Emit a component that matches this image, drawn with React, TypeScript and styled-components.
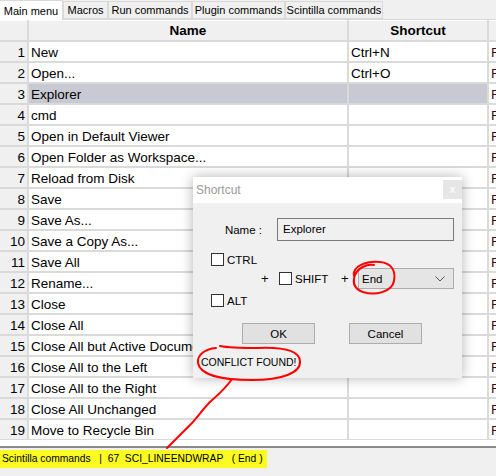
import React from 'react'
import styled, { createGlobalStyle } from 'styled-components'

type Command = {
  name: string,
  shortcut: string,
}

const GlobalStyle = createGlobalStyle`
  html, body {
    margin: 0;
    padding: 0;
    background: #f0f0f0;
    overflow: hidden;
  }
  * {
    box-sizing: border-box;
  }
`

const Page = styled.div`
  position: relative;
  width: 496px;
  height: 476px;
  overflow: hidden;
  font-family: "Liberation Sans", Arial, sans-serif;
  color: #000;
`

const TabBar = styled.div`
  display: flex;
  align-items: flex-end;
  height: 20px;
  background: #f0f0f0;
  border-bottom: 1px solid #d9d9d9;
`

const Tab = styled.div<{ $width: number, $active?: boolean }>`
  width: ${p => p.$width}px;
  height: ${p => p.$active ? 20 : 18}px;
  margin-bottom: ${p => p.$active ? -1 : 0}px;
  display: flex;
  align-items: center;
  justify-content: center;
  font-size: 11px;
  background: ${p => p.$active ? '#fff' : '#f0f0f0'};
  border: 1px solid #d9d9d9;
  border-bottom: ${p => p.$active ? 'none' : '1px solid #d9d9d9'};
  border-left: ${p => p.$active ? 'none' : '1px solid #d9d9d9'};
`

const GridArea = styled.div`
  height: 426px;
  background: #fff;
  overflow: hidden;
`

const Grid = styled.div`
  display: grid;
  grid-template-columns: 27px 318px 138px 200px;
  grid-template-rows: 20px;
  grid-auto-rows: 19px;
  gap: 2px;
  background: #dadada;
  width: max-content;
  padding-bottom: 1px;
`

const HeaderCell = styled.div`
  background: #f0f0f0;
  border-top: 1px solid #fff;
  display: flex;
  align-items: center;
  justify-content: center;
  font-size: 13.5px;
  font-weight: bold;
  white-space: nowrap;
  overflow: hidden;
`

const RowHead = styled.div`
  background: #f0f0f0;
  display: flex;
  align-items: center;
  justify-content: flex-end;
  padding: 1px 2px 0 0;
  font-size: 13.5px;
`

const Cell = styled.div<{ $selected?: boolean, $dim?: boolean }>`
  background: ${p => p.$selected ? '#c8c9d2' : '#fff'};
  display: flex;
  align-items: center;
  padding: 1px 0 0 2px;
  font-size: 13.5px;
  white-space: nowrap;
  overflow: hidden;
  color: ${p => p.$dim ? '#3a0810' : '#000'};
`

const StatusBar = styled.div`
  height: 30px;
  border-top: 2px solid #8a8a8a;
  background: #f0f0f0;
`

const Highlight = styled.span`
  display: inline-block;
  background: #fbfb22;
  padding: 3px 4px 4px 2px;
  font-size: 10.3px;
  white-space: pre;
`

const Dialog = styled.div`
  position: absolute;
  left: 193px;
  top: 177px;
  width: 269px;
  height: 201px;
  background: #f0f0f0;
  box-shadow: 0 0 12px rgba(0, 0, 0, 0.3);
  font-size: 11.5px;
  display: flex;
  flex-direction: column;
`

const TitleBar = styled.div`
  height: 26px;
  background: #fff;
  display: flex;
  justify-content: space-between;
  padding-left: 3px;
  color: #9a9a9a;
  font-size: 12px;
  line-height: 27px;
`

const CloseButton = styled.div`
  width: 19px;
  height: 19px;
  margin-top: 3px;
  background: #e6e6e6;
  color: #fafafa;
  font-size: 11px;
  line-height: 18px;
  text-align: center;
  font-weight: bold;
`

const NameRow = styled.div`
  display: flex;
  align-items: center;
  margin-top: 15px;
  height: 23px;
`

const Label = styled.div`
  width: 69px;
  text-align: right;
  margin-right: 15px;
`

const TextBox = styled.div`
  width: 177px;
  height: 23px;
  border: 1px solid #7a7a7a;
  background: #f0f0f0;
  padding-left: 5px;
  line-height: 20px;
`

const Modifiers = styled.div`
  display: flex;
  flex-direction: column;
  margin-top: 12px;
`

const ModRow = styled.div<{ $indent: number, $height: number, $gap: number }>`
  display: flex;
  align-items: center;
  padding-left: ${p => p.$indent}px;
  height: ${p => p.$height}px;
  margin-top: ${p => p.$gap}px;
`

const Box = styled.div`
  width: 13px;
  height: 13px;
  border: 1px solid #333;
  background: #fff;
  margin-right: 3px;
`

const BoxLabel = styled.span<{ $width?: number }>`
  display: inline-block;
  width: ${p => p.$width ? `${p.$width}px` : 'auto'};
`

const Plus = styled.span<{ $width: number }>`
  display: inline-block;
  width: ${p => p.$width}px;
  font-size: 13px;
`

const Combo = styled.div`
  width: 96px;
  height: 21px;
  border: 1px solid #adadad;
  background: #e5e5e5;
  display: flex;
  align-items: center;
  justify-content: space-between;
  padding: 0 8px 0 3px;
`

const Buttons = styled.div`
  display: flex;
  margin-top: 16px;
  padding-left: 49px;
  gap: 34px;
`

const Button = styled.div`
  width: 73px;
  height: 21px;
  border: 1px solid #adadad;
  background: #e1e1e1;
  display: flex;
  align-items: center;
  justify-content: center;
`

const Conflict = styled.div`
  margin-top: 12px;
  padding-left: 8px;
  font-size: 10.5px;
`

const Marks = styled.svg`
  position: absolute;
  left: 0;
  top: 0;
  pointer-events: none;
`

const commands: Command[] = [
  { name: 'New', shortcut: 'Ctrl+N' },
  { name: 'Open...', shortcut: 'Ctrl+O' },
  { name: 'Explorer', shortcut: '' },
  { name: 'cmd', shortcut: '' },
  { name: 'Open in Default Viewer', shortcut: '' },
  { name: 'Open Folder as Workspace...', shortcut: '' },
  { name: 'Reload from Disk', shortcut: '' },
  { name: 'Save', shortcut: '' },
  { name: 'Save As...', shortcut: '' },
  { name: 'Save a Copy As...', shortcut: '' },
  { name: 'Save All', shortcut: '' },
  { name: 'Rename...', shortcut: '' },
  { name: 'Close', shortcut: '' },
  { name: 'Close All', shortcut: '' },
  { name: 'Close All but Active Document', shortcut: '' },
  { name: 'Close All to the Left', shortcut: '' },
  { name: 'Close All to the Right', shortcut: '' },
  { name: 'Close All Unchanged', shortcut: '' },
  { name: 'Move to Recycle Bin', shortcut: '' },
]

const tabs = [
  { label: 'Main menu', width: 63 },
  { label: 'Macros', width: 45 },
  { label: 'Run commands', width: 84 },
  { label: 'Plugin commands', width: 93 },
  { label: 'Scintilla commands', width: 98 },
]

const App = () => {
  return (
    <Page>
      <GlobalStyle />
      <TabBar>
        {tabs.map((t, i) => (
          <Tab key={t.label} $width={t.width} $active={i === 0}>{t.label}</Tab>
        ))}
      </TabBar>
      <GridArea>
        <Grid>
          <HeaderCell />
          <HeaderCell>Name</HeaderCell>
          <HeaderCell>Shortcut</HeaderCell>
          <HeaderCell />
          {commands.map((c, i) => (
            <React.Fragment key={c.name}>
              <RowHead>{i + 1}</RowHead>
              <Cell $selected={i === 2}>{c.name}</Cell>
              <Cell $selected={i === 2}>{c.shortcut}</Cell>
              <Cell $dim>F</Cell>
            </React.Fragment>
          ))}
        </Grid>
      </GridArea>
      <StatusBar>
        <Highlight>{'Scintilla commands   |  67  SCI_LINEENDWRAP   ( End )'}</Highlight>
      </StatusBar>

      <Dialog>
        <TitleBar>
          Shortcut
          <CloseButton>x</CloseButton>
        </TitleBar>
        <NameRow>
          <Label>Name :</Label>
          <TextBox>Explorer</TextBox>
        </NameRow>
        <Modifiers>
          <ModRow $indent={18} $height={13} $gap={0}>
            <Box />CTRL
          </ModRow>
          <ModRow $indent={68} $height={21} $gap={2}>
            <Plus $width={18}>+</Plus>
            <Box />
            <BoxLabel $width={46}>SHIFT</BoxLabel>
            <Plus $width={17}>+</Plus>
            <Combo>
              End
              <svg width="10" height="6" viewBox="0 0 10 6">
                <path d="M0.5 0.5 L5 5 L9.5 0.5" fill="none" stroke="#555" strokeWidth="1" />
              </svg>
            </Combo>
          </ModRow>
          <ModRow $indent={18} $height={13} $gap={5}>
            <Box />ALT
          </ModRow>
        </Modifiers>
        <Buttons>
          <Button>OK</Button>
          <Button>Cancel</Button>
        </Buttons>
        <Conflict>CONFLICT FOUND!</Conflict>
      </Dialog>

      <Marks width="496" height="476" viewBox="0 0 496 476">
        <g fill="none" stroke="#f00" strokeWidth="2" strokeLinecap="round" strokeLinejoin="round">
          <path d="M354 276 C352 266, 366 261, 380 262 C391 263, 396 270, 394 281 C392 292, 375 296, 363 292 C355 289, 352 283, 355 275 C358 268, 366 264, 374 265" />
          <path d="M216 348 C206 349, 197 354, 198 363 C200 375, 222 380, 252 380 C282 380, 301 373, 300 361 C299 350, 283 347, 258 348 C244 348, 230 348, 220 346" />
          <path d="M232 379 C226 388, 218 395, 210 402 C202 410, 197 418, 190 425 C182 433, 175 440, 167 448" />
        </g>
      </Marks>
    </Page>
  )
}

export default App
